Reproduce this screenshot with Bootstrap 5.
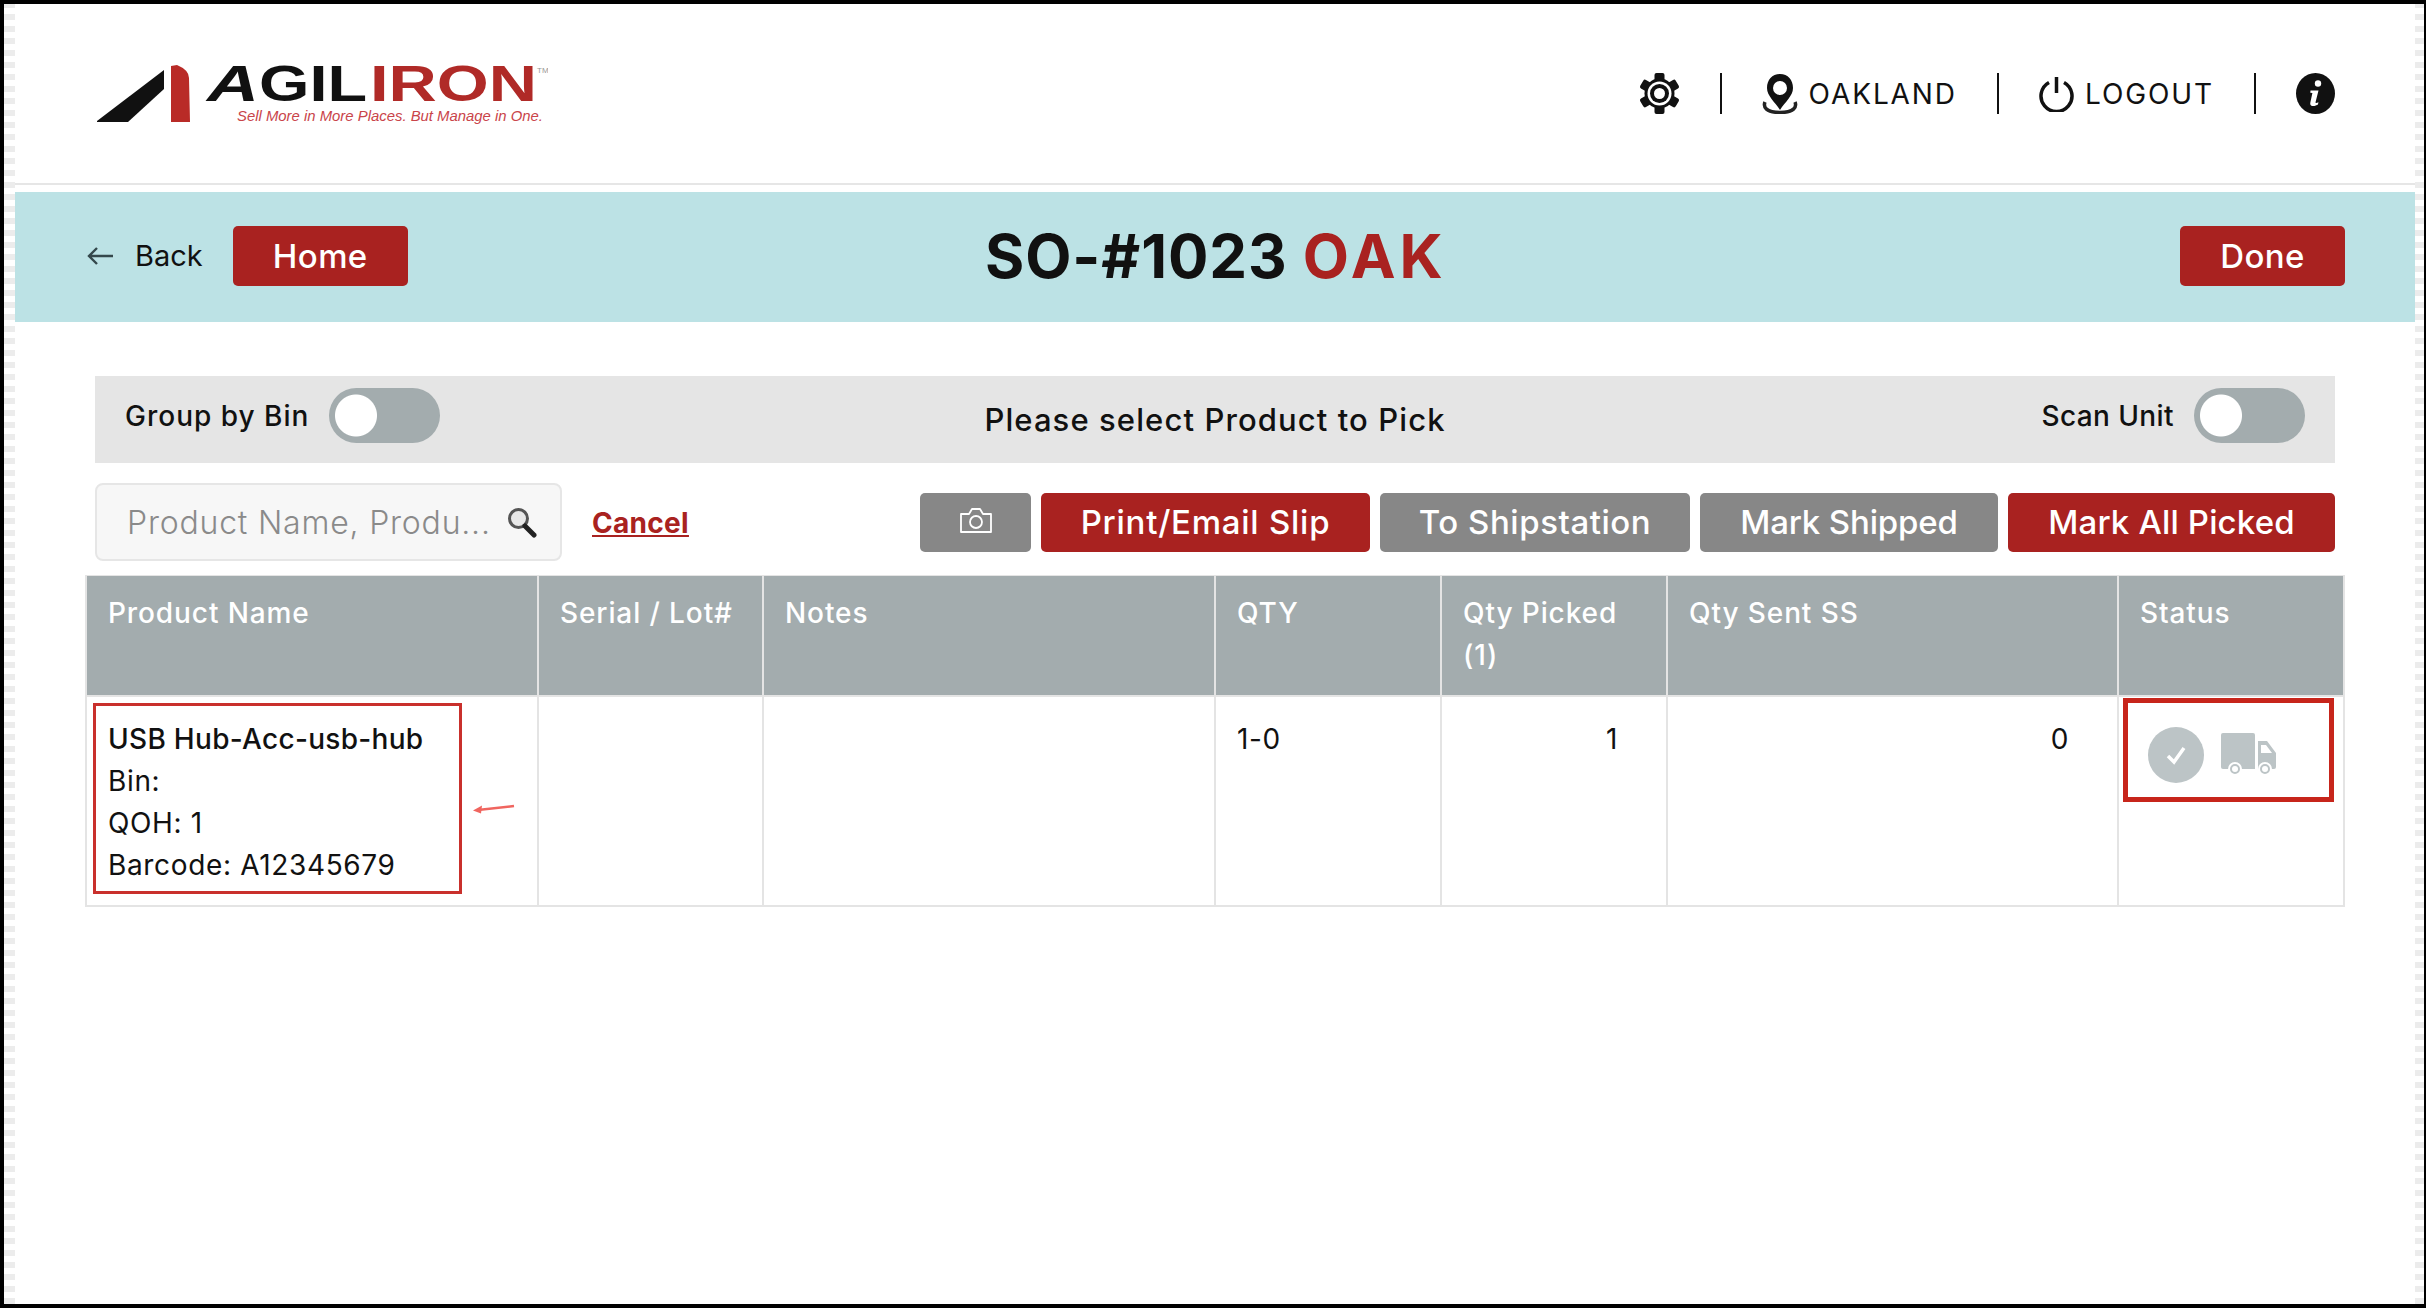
<!DOCTYPE html>
<html lang="en">
<head>
<meta charset="utf-8">
<title>SO-#1023 OAK</title>
<link href="https://cdn.jsdelivr.net/npm/bootstrap@5.3.0/dist/css/bootstrap.min.css" rel="stylesheet">
<style>
html,body{margin:0;background:#fff}
body{font-family:Inter,"Liberation Sans",sans-serif;color:#111;font-size:28px;line-height:42px}
.pg-frame{width:2426px;height:1308px;border:solid #000;border-width:4px 2px 4px 4px;padding:0 9px 0 11px;
 background:repeating-linear-gradient(0deg,#ececec 0 6px,#fff 6px 12px)}
.pg-inner{height:100%;background:#fff}
.top-head{height:181px;border-bottom:2px solid #e6e6e6;padding:0 80px 0 82px;margin-bottom:7px}
.nav-sep{width:2px;height:41px;background:#111}
.nav-text{font-size:28px;letter-spacing:1.9px;font-weight:400;color:#111}
.nav-group{gap:40px}
.nav-item{gap:11px}
.band{height:130px;background:#bce2e5;padding:0 70px 2px 72px}
.side{flex:1 1 0}
.back-link{font-size:29px;color:#111;font-weight:400;text-decoration:none;gap:22px}
.title-main{font-size:60px;line-height:1;font-weight:700;letter-spacing:.9px;margin:0;color:#111}
.title-main span{letter-spacing:4.2px}
.title-main span,.cancel-link{color:#a92220}
.btn-red,.btn-grey{--bs-btn-color:#fff;--bs-btn-hover-color:#fff;--bs-btn-border-width:0;height:59px;padding:0;font-size:33px;line-height:59px;font-weight:500;letter-spacing:.75px;border-radius:5px;--bs-btn-border-radius:5px}
.btn-red{--bs-btn-bg:#a92220;--bs-btn-hover-bg:#a92220}
.btn-grey{--bs-btn-bg:#878787;--bs-btn-hover-bg:#878787}
.w-home{width:175px;height:60px;letter-spacing:.4px;margin-left:30px}.w-done{width:165px;height:60px;letter-spacing:.4px}
.w-cam{width:111px}.w-print{width:329px}.w-ship{width:310px;letter-spacing:.55px}.w-mark{width:298px;letter-spacing:-.15px}.w-all{width:327px;letter-spacing:.15px}
.pick-bar{height:87px;background:#e5e5e5;margin:54px 80px 0;padding:0 30px}
.bar-label{font-size:28px;font-weight:500;letter-spacing:1px}
.lbl-scan{letter-spacing:.4px}
.bar-group{margin-bottom:8px;gap:20px}
.bar-msg{font-size:31px;font-weight:500;letter-spacing:1.1px;margin-top:1px}
.form-switch.sw-wrap{padding:0;margin:0;min-height:0;line-height:0}
.form-switch .form-check-input.sw-input{width:111px;height:55px;margin:0;border:0;border-radius:28px;background-color:#a3acae;
 background-image:radial-gradient(circle at 27px 50%,#fff 20.5px,transparent 21.5px);background-size:auto;background-position:0 0}
.search-row{margin:20px 80px 14px 80px;height:78px}
.search-box{width:467px;height:78px;background:#f7f7f7;border:2px solid #e6e6e6;border-radius:8px;padding:0 23px 0 30px}
.search-box input{flex:1;min-width:0;border:0;outline:0;background:transparent;font:300 32px/1 Inter,"Liberation Sans",sans-serif;letter-spacing:.8px;color:#777;padding:0}
.search-box input::placeholder{color:#8a8a8a;opacity:1}
.cancel-link{font-weight:700;font-size:28px;letter-spacing:.3px;margin-left:30px;margin-top:2px}
.act-group{gap:10px}
.pick-table{table-layout:fixed;width:2258px;margin:0 0 0 70px;--bs-table-border-color:#e4e4e4;border-color:#e4e4e4;--bs-table-color:#111}
.pick-table>:not(caption)>*>*{border-width:2px;padding:21px 21px 0;font-size:28px;line-height:42px;font-weight:400;letter-spacing:.65px}
.pick-table thead th{--bs-table-bg:#a3acae;--bs-table-color:#fff;color:#fff;background:#a3acae;height:120px;padding-top:16px;font-weight:500;vertical-align:top;border-top:0;letter-spacing:.9px}
.pick-table td{height:210px;vertical-align:top;position:relative}
.prod-name{font-weight:500;letter-spacing:.3px}
.num-cell{text-align:right;padding-right:48px!important}
.note-box{position:absolute;border-style:solid;pointer-events:none}
.note-name{left:6px;top:6px;width:369px;height:191px;border-width:3px;border-color:#c9302c}
.note-stat{left:4px;top:1px;width:211px;height:104px;border-width:5px;border-color:#c7251b}
.note-arrow{position:absolute;left:386px;top:106px}
.stat-icons{margin:9px 0 0 8px;gap:17px}
</style>
</head>
<body>
<div class="pg-frame">
<div class="pg-inner">

<header class="top-head d-flex align-items-center justify-content-between">
  <svg width="451" height="84" viewBox="0 -12 451 84" role="img" aria-label="AgilIron logo">
    <polygon points="0,57 67,6 67,25 31,58 0,58" fill="#111"/>
    <path d="M74 2 80 1Q92 6 92 14L93 58H74Z" fill="#b92b27"/>
    <text x="110" y="37" font-family="Liberation Sans,sans-serif" font-weight="700" font-style="italic" font-size="50" textLength="52" lengthAdjust="spacingAndGlyphs" fill="#111">A</text>
    <text x="162" y="37" font-family="Liberation Sans,sans-serif" font-weight="700" font-size="50" textLength="108" lengthAdjust="spacingAndGlyphs" fill="#111">GIL</text>
    <text x="273" y="37" font-family="Liberation Sans,sans-serif" font-weight="700" font-size="50" textLength="167" lengthAdjust="spacingAndGlyphs" fill="#b02a27">IRON</text>
    <text x="440" y="9" font-family="Liberation Sans,sans-serif" font-size="8" fill="#999">TM</text>
    <text x="140" y="57" font-family="Liberation Sans,sans-serif" font-style="italic" font-size="14" textLength="306" lengthAdjust="spacingAndGlyphs" fill="#c9444a">Sell More in More Places. But Manage in One.</text>
  </svg>
  <nav class="d-flex align-items-center nav-group">
    <svg width="41" height="41" viewBox="0 0 41 41" aria-label="Settings">
      <g fill="#111"><circle cx="20.5" cy="20.5" r="15"/>
      <rect x="15.5" y="0" width="10" height="41" rx="2"/>
      <rect x="15.5" y="0" width="10" height="41" rx="2" transform="rotate(60 20.5 20.5)"/>
      <rect x="15.5" y="0" width="10" height="41" rx="2" transform="rotate(120 20.5 20.5)"/></g>
      <circle cx="20.5" cy="20.5" r="12" fill="#fff"/>
      <circle cx="20.5" cy="20.5" r="9.5" fill="#111"/>
      <circle cx="20.5" cy="20.5" r="5.5" fill="#fff"/>
    </svg>
    <span class="nav-sep"></span>
    <span class="d-flex align-items-center nav-item">
      <svg width="36" height="40" viewBox="0 0 36 40" aria-label="Location">
        <path d="M3 28C1 33 4 38.500 18 38.500S35 33 33 28" fill="none" stroke="#222" stroke-width="3.500"/>
        <path d="M18 0C10 0 5 6 5 14c0 8 8 14 13 22 5-8 13-14 13-22C31 6 26 0 18 0Z" fill="#111"/>
        <circle cx="18" cy="14" r="7" fill="#fff"/>
      </svg>
      <span class="nav-text">OAKLAND</span>
    </span>
    <span class="nav-sep"></span>
    <span class="d-flex align-items-center nav-item">
      <svg width="35" height="36" viewBox="0 0 35 36" aria-label="Power">
        <path d="M10 6.500A15.500 15.500 0 1 0 25 6.500" fill="none" stroke="#111" stroke-width="3.500"/>
        <path d="M17.500 1V17" stroke="#111" stroke-width="3.500"/>
      </svg>
      <span class="nav-text">LOGOUT</span>
    </span>
    <span class="nav-sep"></span>
    <svg width="39" height="41" viewBox="0 0 39 41" aria-label="Info">
      <ellipse cx="19.5" cy="20.5" rx="19.5" ry="20.5" fill="#111"/>
      <circle cx="22" cy="10.5" r="3.2" fill="#fff"/>
      <path d="M14.5 17.5h8L19.6 29c-.3 1.3.8 1.4 2.8.3l-.4 2.2c-2.600 1.800-8.800 3-7.600-2.300l2-9.300-2.100-.2Z" fill="#fff"/>
    </svg>
  </nav>
</header>

<section class="band d-flex align-items-center">
  <div class="side d-flex align-items-center">
    <a href="#" class="back-link d-flex align-items-center">
      <svg width="26" height="20" viewBox="0 0 26 20" aria-hidden="true"><path d="M26 10H2M10 2 2 10l8 8" fill="none" stroke="#34484c" stroke-width="2.400"/></svg>
      Back
    </a>
    <button type="button" class="btn btn-red w-home">Home</button>
  </div>
  <h1 class="title-main">SO-#1023 <span>OAK</span></h1>
  <div class="side d-flex justify-content-end">
    <button type="button" class="btn btn-red w-done">Done</button>
  </div>
</section>

<section class="pick-bar d-flex align-items-center">
  <div class="side d-flex align-items-center bar-group">
    <span class="bar-label">Group by Bin</span>
    <div class="form-check form-switch sw-wrap"><input class="form-check-input sw-input" type="checkbox" role="switch" aria-label="Group by Bin"></div>
  </div>
  <div class="bar-msg">Please select Product to Pick</div>
  <div class="side d-flex align-items-center justify-content-end bar-group">
    <span class="bar-label lbl-scan">Scan Unit</span>
    <div class="form-check form-switch sw-wrap"><input class="form-check-input sw-input" type="checkbox" role="switch" aria-label="Scan Unit"></div>
  </div>
</section>

<section class="search-row d-flex align-items-center justify-content-between">
  <div class="d-flex align-items-center">
    <div class="search-box d-flex align-items-center">
      <input type="text" placeholder="Product Name, Produ..." aria-label="Search">
      <svg width="30" height="31" viewBox="0 0 30 31" aria-hidden="true">
        <circle cx="11.500" cy="11.500" r="9" fill="#e8e8e8" stroke="#555" stroke-width="3"/>
        <path d="M18 19l9 9" stroke="#222" stroke-width="5" stroke-linecap="round"/>
      </svg>
    </div>
    <a href="#" class="cancel-link">Cancel</a>
  </div>
  <div class="d-flex act-group">
    <button type="button" class="btn btn-grey w-cam d-flex align-items-center justify-content-center" aria-label="Camera">
      <svg width="34" height="25" viewBox="0 0 34 25" class="mb-1" aria-hidden="true"><path d="M2 6h8l3-5h8l3 5h8v18H2Z" fill="none" stroke="#fff" stroke-width="1.800" stroke-linejoin="round"/><circle cx="17" cy="14" r="6" fill="none" stroke="#fff" stroke-width="1.800"/></svg>
    </button>
    <button type="button" class="btn btn-red w-print">Print/Email Slip</button>
    <button type="button" class="btn btn-grey w-ship">To Shipstation</button>
    <button type="button" class="btn btn-grey w-mark">Mark Shipped</button>
    <button type="button" class="btn btn-red w-all">Mark All Picked</button>
  </div>
</section>

<table class="table table-bordered pick-table">
  <colgroup>
    <col style="width:452px"><col style="width:225px"><col style="width:452px"><col style="width:226px"><col style="width:226px"><col style="width:451px"><col style="width:226px">
  </colgroup>
  <thead>
    <tr><th>Product Name</th><th>Serial / Lot#</th><th>Notes</th><th>QTY</th><th>Qty Picked<br>(1)</th><th>Qty Sent SS</th><th>Status</th></tr>
  </thead>
  <tbody>
    <tr>
      <td>
        <div class="prod-name">USB Hub-Acc-usb-hub</div>
        <div>Bin:</div>
        <div>QOH: 1</div>
        <div>Barcode: A12345679</div>
        <span class="note-box note-name"></span>
        <svg class="note-arrow" width="42" height="12" viewBox="0 0 42 12" aria-hidden="true"><path d="M41 3 5 7" stroke="#f0655f" stroke-width="2.500"/><path d="M0 7.500 9 2.500 8 10.500Z" fill="#f0655f"/></svg>
      </td>
      <td></td>
      <td></td>
      <td>1-0</td>
      <td class="num-cell">1</td>
      <td class="num-cell">0</td>
      <td>
        <div class="d-flex align-items-center stat-icons">
          <svg width="56" height="56" viewBox="0 0 56 56" aria-label="Picked"><circle cx="28" cy="28" r="28" fill="#bcc4c6"/><path d="M20 29l6 6 10-14" fill="none" stroke="#fff" stroke-width="3.500"/></svg>
          <svg width="56" height="43" viewBox="0 0 56 43" aria-label="Shipped">
            <path d="M2 0H32a2 2 0 0 1 2 2V36H2a2 2 0 0 1-2-2V2A2 2 0 0 1 2 0Z" fill="#bcc4c6"/>
            <path d="M37 8H46L55 20V34a2 2 0 0 1-2 2H37Z" fill="#bcc4c6"/>
            <path d="M40 12H45L51 20H40Z" fill="#fff"/>
            <circle cx="14" cy="36" r="6" fill="#bcc4c6" stroke="#fff" stroke-width="2"/>
            <circle cx="44" cy="36" r="6" fill="#bcc4c6" stroke="#fff" stroke-width="2"/>
            <circle cx="14" cy="36" r="3" fill="#fff"/><circle cx="44" cy="36" r="3" fill="#fff"/>
          </svg>
        </div>
        <span class="note-box note-stat"></span>
      </td>
    </tr>
  </tbody>
</table>

</div>
</div>
<script src="https://cdn.jsdelivr.net/npm/bootstrap@5.3.0/dist/js/bootstrap.bundle.min.js"></script>
</body>
</html>
